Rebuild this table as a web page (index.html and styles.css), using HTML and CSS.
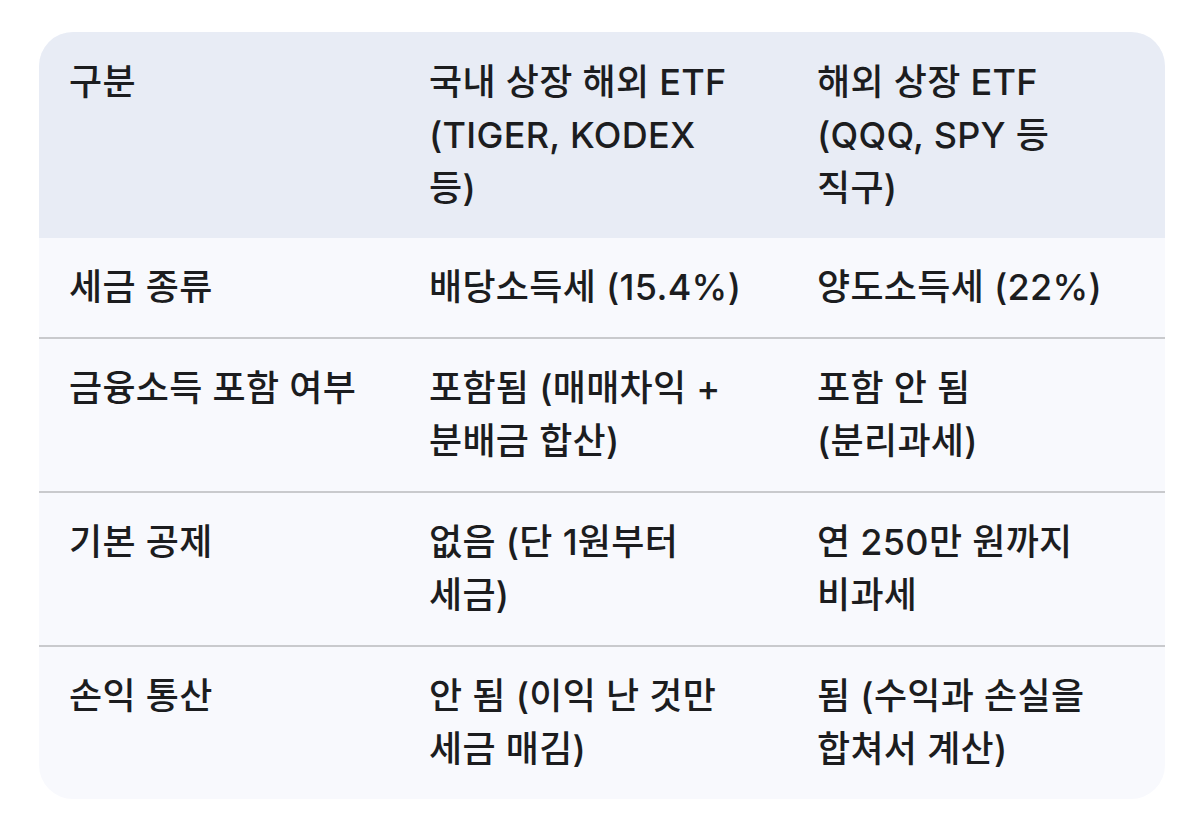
FILE: index.html
```html
<!DOCTYPE html>
<html lang="ko">
<head>
<meta charset="utf-8">
<link rel="stylesheet" href="styles.css">
</head>
<body>
<div class="page">
  <div class="card">
    <table class="tbl">
      <colgroup>
        <col class="c1"><col class="c2"><col class="c3">
      </colgroup>
      <thead>
        <tr>
          <th>구분</th>
          <th class="mid">국내 상장 해외 ETF (TIGER, KODEX 등)</th>
          <th>해외 상장 ETF (QQQ, SPY 등 직구)</th>
        </tr>
      </thead>
      <tbody>
        <tr>
          <td>세금 종류</td>
          <td class="mid">배당소득세 (15.4%)</td>
          <td>양도소득세 (22%)</td>
        </tr>
        <tr>
          <td>금융소득 포함 여부</td>
          <td class="mid">포함됨 (매매차익 + 분배금 합산)</td>
          <td>포함 안 됨 (분리과세)</td>
        </tr>
        <tr>
          <td>기본 공제</td>
          <td class="mid">없음 (단 1원부터 세금)</td>
          <td>연 250만 원까지 비과세</td>
        </tr>
        <tr>
          <td>손익 통산</td>
          <td class="mid">안 됨 (이익 난 것만 세금 매김)</td>
          <td>됨 (수익과 손실을 합쳐서 계산)</td>
        </tr>
      </tbody>
    </table>
  </div>
</div>
</body>
</html>
```
FILE: styles.css
```css
html, body {
  margin: 0;
  padding: 0;
  background: #ffffff;
}
.page {
  padding: 32px 35px 0 39px;
}
.card {
  width: 1126px;
  border-radius: 34px;
  overflow: hidden;
  background: #f8f9fd;
}
.tbl {
  width: 100%;
  border-collapse: collapse;
  table-layout: fixed;
  font-family: Inter, "Noto Sans CJK KR", sans-serif;
  font-size: 36px;
  line-height: 53px;
  letter-spacing: 0.3px;
  color: #1c1d1f;
  word-break: keep-all;
}
.c1 { width: 360px; }
.c2 { width: 388px; }
.c3 { width: 378px; }
.tbl th,
.tbl td {
  text-align: left;
  vertical-align: top;
  padding: 24px 30px 23px 30px;
  font-weight: 500;
}
.tbl th.mid,
.tbl td.mid {
  padding-right: 44px;
}
.tbl thead th {
  background: #e8ecf5;
}
.tbl tbody tr + tr td {
  border-top: 2px solid #c9cacd;
}
.tbl tbody td {
  padding-top: 23px;
  padding-bottom: 23px;
}
```
